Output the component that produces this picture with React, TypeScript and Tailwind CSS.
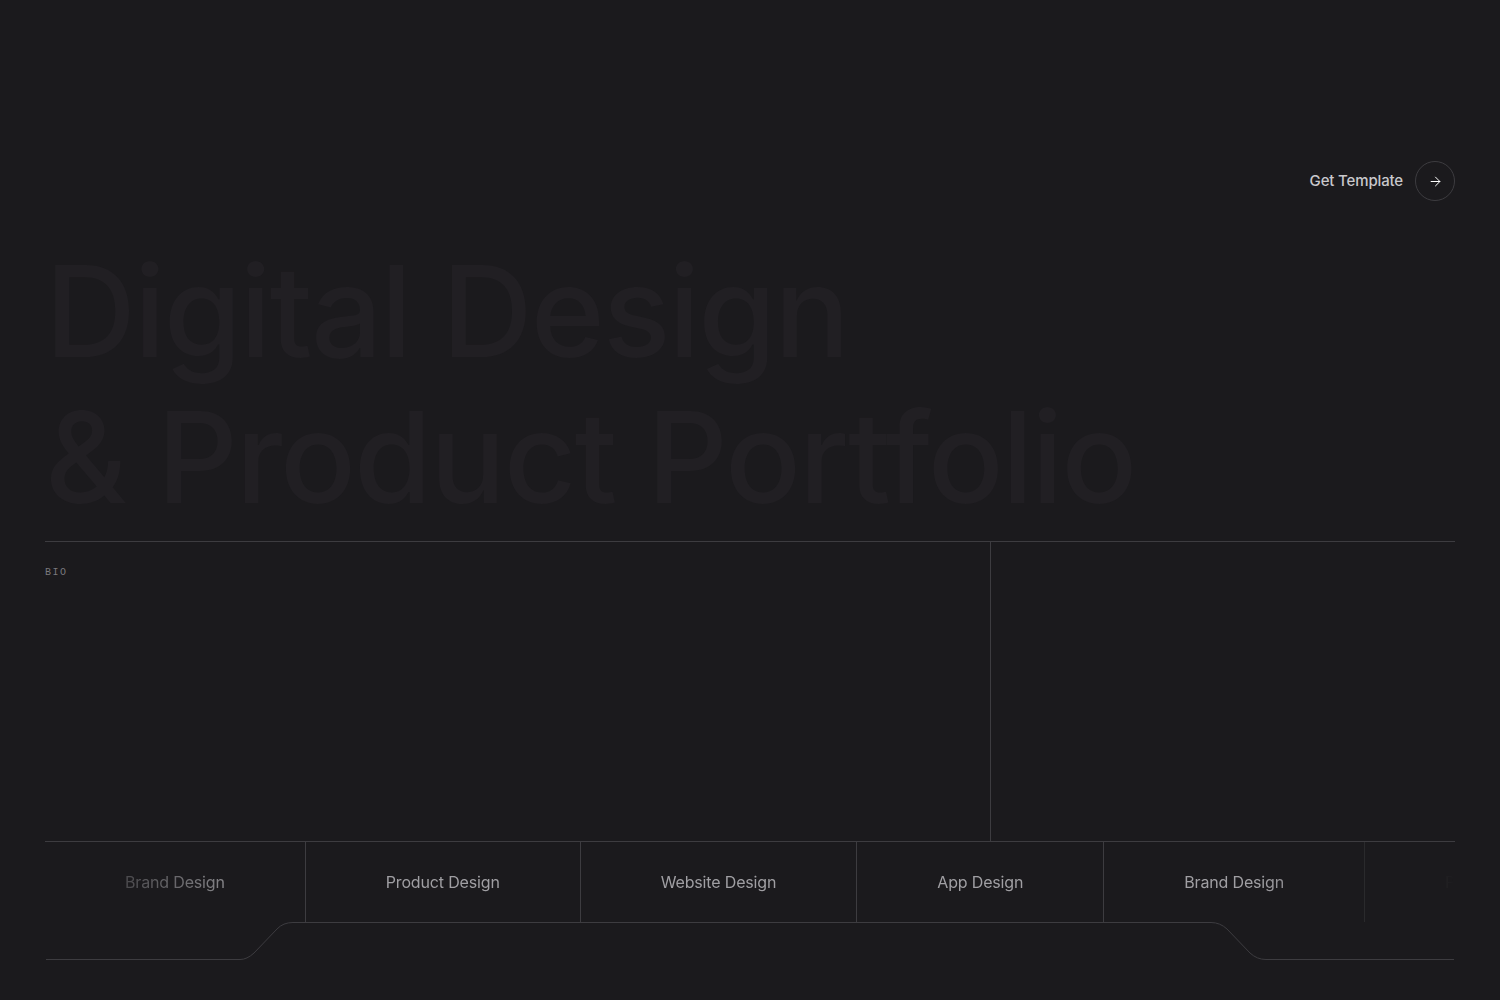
import { ArrowRight } from "lucide-react";

const tabs = ["Brand Design", "Product Design", "Website Design", "App Design", "Brand Design", "Product Design"];

export default function App() {
  return (
    <div className="min-h-screen w-full bg-[#1b1a1d] px-[45px] pt-[161px] font-['Inter','Liberation_Sans',sans-serif] text-white">
      {/* header */}
      <div className="flex h-10 items-center justify-end gap-3">
        <span className="pt-px text-[15px] font-medium tracking-[-0.01em] text-[#c9c8cc]">Get Template</span>
        <button className="flex h-10 w-10 items-center justify-center rounded-full border border-[#3d3c40]">
          <ArrowRight size={15} strokeWidth={1.6} className="text-white" />
        </button>
      </div>

      {/* hero title */}
      <h1 className="mt-[37px] text-[126px] font-medium leading-[146px] tracking-[-0.016em] text-[#211f23]">
        Digital Design
        <br />& Product Portfolio
      </h1>

      {/* bio block */}
      <div className="mt-[11px] grid h-[300px] grid-cols-[945px_1fr] border-t border-[#3d3c40]">
        <div className="pt-[15px]">
          <span className="font-['Liberation_Mono',monospace] text-[10px] tracking-[0.15em] text-[#7a797d]">BIO</span>
        </div>
        <div className="border-l border-[#3d3c40]" />
      </div>

      {/* services marquee */}
      <div className="border-t border-[#3d3c40]">
        <div className="flex h-[80px] overflow-hidden [mask-image:linear-gradient(to_right,transparent_0%,black_16%,black_86%,transparent_100%)]">
          {tabs.map((t, i) => (
            <div
              key={i}
              className="flex shrink-0 items-center border-r border-[#3d3c40] px-20 text-[16px] tracking-[-0.01em] text-[#a09fa3]"
            >
              {t}
            </div>
          ))}
        </div>
        <svg className="block h-[39px] w-full" viewBox="0 0 1410 39" preserveAspectRatio="none" fill="none">
          <path
            d="M1 37.5 H195 Q202 37.5 209 31 L232 7 Q238 0.5 248 0.5 H1166 Q1175 0.5 1182 7 L1205 31 Q1212 37.5 1221 37.5 H1409"
            stroke="#3d3c40"
            strokeWidth="1"
          />
        </svg>
      </div>
    </div>
  );
}
